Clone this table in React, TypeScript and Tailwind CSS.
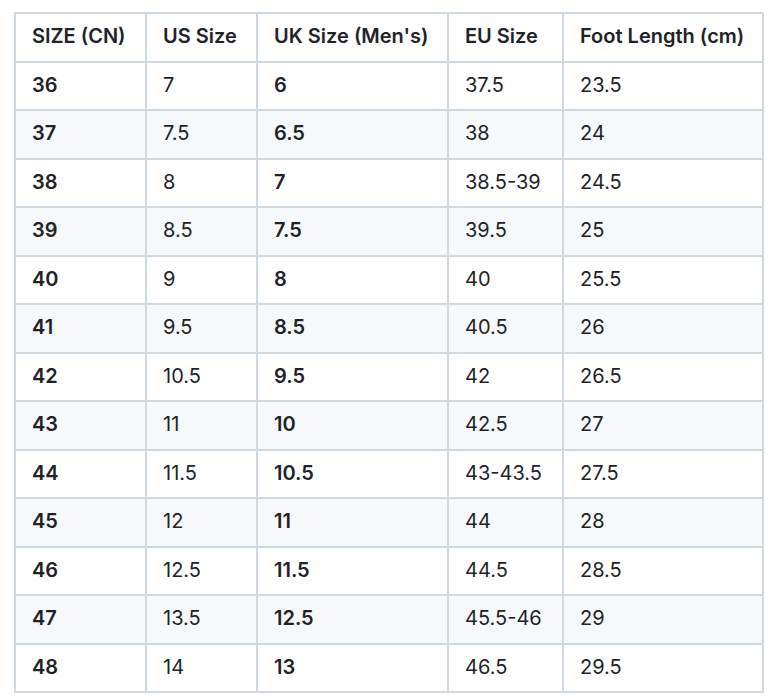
type Row = [string, string, string, string, string];

const rows: Row[] = [
  ["36", "7", "6", "37.5", "23.5"],
  ["37", "7.5", "6.5", "38", "24"],
  ["38", "8", "7", "38.5-39", "24.5"],
  ["39", "8.5", "7.5", "39.5", "25"],
  ["40", "9", "8", "40", "25.5"],
  ["41", "9.5", "8.5", "40.5", "26"],
  ["42", "10.5", "9.5", "42", "26.5"],
  ["43", "11", "10", "42.5", "27"],
  ["44", "11.5", "10.5", "43-43.5", "27.5"],
  ["45", "12", "11", "44", "28"],
  ["46", "12.5", "11.5", "44.5", "28.5"],
  ["47", "13.5", "12.5", "45.5-46", "29"],
  ["48", "14", "13", "46.5", "29.5"],
];

const headers = ["SIZE (CN)", "US Size", "UK Size (Men's)", "EU Size", "Foot Length (cm)"];

export default function App() {
  return (
    <div
      className="bg-white pl-[14px] pt-[12px] text-[#1f2328] text-[20px] leading-[28.5px]"
      style={{ fontFamily: "Inter, 'Noto Sans', sans-serif" }}
    >
      <table className="border-collapse table-fixed w-[748px]">
        <colgroup>
          <col className="w-[131px]" />
          <col className="w-[111px]" />
          <col className="w-[191px]" />
          <col className="w-[115px]" />
          <col className="w-[200px]" />
        </colgroup>
        <thead>
          <tr className="bg-white">
            {headers.map((h) => (
              <th
                key={h}
                className="border-2 border-[#d1d9e0] pl-[16px] pr-[18px] pt-[8px] pb-[10px] text-left font-semibold whitespace-nowrap"
              >
                {h}
              </th>
            ))}
          </tr>
        </thead>
        <tbody>
          {rows.map((r, i) => (
            <tr key={r[0]} className={i % 2 === 1 ? "bg-[#f6f8fa]" : "bg-white"}>
              {r.map((c, j) => (
                <td
                  key={j}
                  className={`border-2 border-[#d1d9e0] pl-[16px] pr-[18px] pt-[8px] pb-[10px] whitespace-nowrap ${
                    j === 0 || j === 2 ? "font-semibold" : "font-normal"
                  }`}
                >
                  {c}
                </td>
              ))}
            </tr>
          ))}
        </tbody>
      </table>
    </div>
  );
}
